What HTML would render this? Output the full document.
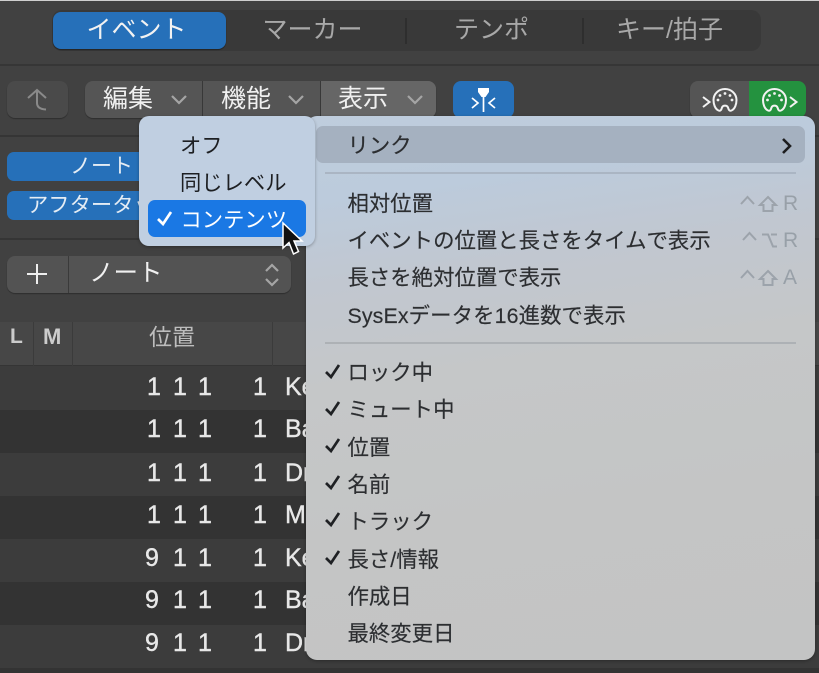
<!DOCTYPE html>
<html lang="ja"><head><meta charset="utf-8">
<style>
html,body{margin:0;padding:0;background:#3f3f3f}
#p{position:relative;width:819px;height:673px;overflow:hidden;background:#414141;font-family:"Liberation Sans","Noto Sans CJK JP",sans-serif;}
#p div,#p span.t,#p svg{position:absolute}
.t{position:absolute;white-space:nowrap;line-height:28px;height:28px}
.btn{background:#555;border-radius:8px;box-shadow:0 1px 1px rgba(0,0,0,.3)}
.m{font-size:21.400px;color:#2c2e31;left:347.500px;-webkit-text-stroke:.15px #2c2e31}
.n{font-size:25px;color:#e8e8e8;-webkit-text-stroke:.4px #e8e8e8}
.tab{font-size:25px;color:#a8a8a8;top:16px;text-align:center}
.tb{font-size:25px;color:#f0f0f0;top:85px}
.s{font-size:21px;color:#98a0a8;left:783px}
.a{left:147px}.b{left:173px}.c{left:198px}.d{left:253px}.e{left:285px}.f{left:145px}
</style></head><body>
<div id="p">
<div style="left:0;top:0;width:819px;height:1px;background:#cfcfcf"></div>
<!-- tabs -->
<div style="left:52px;top:10px;width:709px;height:41px;background:#393939;border-radius:10px"></div>
<div style="left:53px;top:12px;width:173px;height:37px;background:#2670b9;border-radius:8px;box-shadow:0 1px 1px rgba(0,0,0,.4)"></div>
<div style="left:405px;top:18px;width:2px;height:26px;background:#2e2e2e"></div>
<div style="left:582px;top:18px;width:2px;height:26px;background:#2e2e2e"></div>
<span class="t tab" style="left:50px;width:173px;color:#f2f2f2">イベント</span>
<span class="t tab" style="left:223px;width:179px">マーカー</span>
<span class="t tab" style="left:404px;width:175px">テンポ</span>
<span class="t tab" style="left:581px;width:177px">キー/拍子</span>
<div style="left:0;top:64px;width:819px;height:2px;background:#363636"></div>
<!-- toolbar -->
<div class="btn" style="left:7px;top:81px;width:61px;height:37px;background:#4a4a4a"></div>
<svg style="left:24px;top:86px" width="28" height="28" viewBox="0 0 28 28" fill="none" stroke="#8a8a8a" stroke-width="2"><path d="M4 12L13 4L22 12M13 4V17Q13 23 22 23.500"/></svg>
<div class="btn" style="left:85px;top:81px;width:351px;height:37px"></div>
<div style="left:320px;top:81px;width:116px;height:37px;background:#666;border-radius:0 8px 8px 0"></div>
<div style="left:202px;top:81px;width:1px;height:37px;background:#383838"></div>
<div style="left:320px;top:81px;width:1px;height:37px;background:#383838"></div>
<span class="t tb" style="left:103px">編集</span>
<span class="t tb" style="left:221px">機能</span>
<span class="t tb" style="left:338px">表示</span>
<svg style="left:170px;top:93px" width="18" height="14" fill="none" stroke="#a5a5a5" stroke-width="2.200"><path d="M2 3L9 10L16 3"/></svg>
<svg style="left:287px;top:93px" width="18" height="14" fill="none" stroke="#a5a5a5" stroke-width="2.200"><path d="M2 3L9 10L16 3"/></svg>
<svg style="left:406px;top:93px" width="18" height="14" fill="none" stroke="#a5a5a5" stroke-width="2.200"><path d="M2 3L9 10L16 3"/></svg>
<div style="left:453px;top:81px;width:61px;height:37px;background:#2670b9;border-radius:8px"></div>
<svg style="left:470px;top:86px" width="28" height="30" fill="none" stroke="#fff"><path d="M13.500 8V26M2 12L8 17L2 22M25 12L19 17L25 22" stroke-width="1.700"/><path d="M8 2H19V6L15.500 11H11.500L8 6Z" fill="#fff" stroke="none"/></svg>
<div class="btn" style="left:690px;top:81px;width:70px;height:37px"></div>
<div style="left:749px;top:81px;width:57px;height:37px;background:#24923f;border-radius:0 8px 8px 0"></div>
<svg style="left:700px;top:86px" width="44" height="28" fill="none" stroke="#f2f2f2" stroke-width="2"><path d="M3 11L9.500 16L3 21"/><path d="M18.500 24.500C15 23 13.500 18 13.500 14A11.500 11 0 0 1 36.500 14C36.500 18 35 23 31.500 24.500C29 25.500 28.500 23 28 21.500C27 19 23 19 22 21.500C21.500 23 21 25.500 18.500 24.500Z"/><g fill="#f2f2f2" stroke="none"><circle cx="25" cy="7.500" r="1.400"/><circle cx="20" cy="9.500" r="1.400"/><circle cx="30" cy="9.500" r="1.400"/><circle cx="18" cy="14" r="1.400"/><circle cx="32" cy="14" r="1.400"/></g></svg>
<svg style="left:760px;top:86px" width="44" height="28" fill="none" stroke="#f2f2f2" stroke-width="2"><path d="M30 11L36.500 16L30 21"/><g transform="translate(-10.500 0)"><path d="M18.500 24.500C15 23 13.500 18 13.500 14A11.500 11 0 0 1 36.500 14C36.500 18 35 23 31.500 24.500C29 25.500 28.500 23 28 21.500C27 19 23 19 22 21.500C21.500 23 21 25.500 18.500 24.500Z"/><g fill="#f2f2f2" stroke="none"><circle cx="25" cy="7.500" r="1.400"/><circle cx="20" cy="9.500" r="1.400"/><circle cx="30" cy="9.500" r="1.400"/><circle cx="18" cy="14" r="1.400"/><circle cx="32" cy="14" r="1.400"/></g></g></svg>
<div style="left:0;top:135px;width:819px;height:2px;background:#353535"></div>
<!-- pills -->
<div style="left:7px;top:152px;width:150px;height:29px;background:#2670b9;border-radius:7px"></div>
<div style="left:7px;top:191px;width:150px;height:29px;background:#2670b9;border-radius:7px"></div>
<span class="t" style="left:70px;top:153px;font-size:21px;color:#e4ecf4">ノート</span>
<span class="t" style="left:27px;top:191px;font-size:21.300px;color:#e4ecf4">アフタータッチ</span>
<div style="left:0;top:238px;width:819px;height:2px;background:#353535"></div>
<!-- add bar -->
<div class="btn" style="left:7px;top:256px;width:284px;height:37px;background:#535353"></div>
<div style="left:68px;top:256px;width:1px;height:37px;background:#3a3a3a"></div>
<svg style="left:27px;top:264px" width="20" height="20" stroke="#eee" stroke-width="2"><path d="M10 0V20M0 10H20"/></svg>
<span class="t" style="left:89px;top:260px;font-size:24.500px;color:#f0f0f0">ノート</span>
<svg style="left:263px;top:262px" width="18" height="26" fill="none" stroke="#a5a5a5" stroke-width="2.200"><path d="M3 9L9 3L15 9M3 17L9 23L15 17"/></svg>
<!-- table -->
<div style="left:0;top:310px;width:819px;height:12px;background:#414141"></div>
<div style="left:0;top:322px;width:819px;height:44px;background:#474747;border-bottom:1px solid #353535;box-sizing:border-box"></div>
<div style="left:33px;top:322px;width:1px;height:44px;background:#3b3b3b"></div>
<div style="left:72px;top:322px;width:1px;height:44px;background:#3b3b3b"></div>
<div style="left:272px;top:322px;width:1px;height:44px;background:#3b3b3b"></div>
<span class="t" style="left:10px;top:323px;font-size:21px;color:#ccc;font-weight:700">L</span>
<span class="t" style="left:43px;top:323px;font-size:22px;color:#ccc;font-weight:700">M</span>
<span class="t" style="left:149px;top:323px;font-size:23px;color:#bdbdbd">位置</span>
<div style="left:0;top:366px;width:819px;height:44px;background:#3c3c3c"></div>
<div style="left:0;top:410px;width:819px;height:43px;background:#333"></div>
<div style="left:0;top:453px;width:819px;height:43px;background:#3c3c3c"></div>
<div style="left:0;top:496px;width:819px;height:43px;background:#333"></div>
<div style="left:0;top:539px;width:819px;height:43px;background:#3c3c3c"></div>
<div style="left:0;top:582px;width:819px;height:43px;background:#333"></div>
<div style="left:0;top:625px;width:819px;height:43px;background:#3c3c3c"></div>
<div style="left:0;top:668px;width:819px;height:5px;background:#333"></div>
<span class="t n a" style="top:373px">1</span><span class="t n b" style="top:373px">1</span><span class="t n c" style="top:373px">1</span><span class="t n d" style="top:373px">1</span><span class="t n e" style="top:373px">Ke</span>
<span class="t n a" style="top:415px">1</span><span class="t n b" style="top:415px">1</span><span class="t n c" style="top:415px">1</span><span class="t n d" style="top:415px">1</span><span class="t n e" style="top:415px">Ba</span>
<span class="t n a" style="top:459px">1</span><span class="t n b" style="top:459px">1</span><span class="t n c" style="top:459px">1</span><span class="t n d" style="top:459px">1</span><span class="t n e" style="top:459px">Dr</span>
<span class="t n a" style="top:501px">1</span><span class="t n b" style="top:501px">1</span><span class="t n c" style="top:501px">1</span><span class="t n d" style="top:501px">1</span><span class="t n e" style="top:501px">M</span>
<span class="t n f" style="top:544px">9</span><span class="t n b" style="top:544px">1</span><span class="t n c" style="top:544px">1</span><span class="t n d" style="top:544px">1</span><span class="t n e" style="top:544px">Ke</span>
<span class="t n f" style="top:586px">9</span><span class="t n b" style="top:586px">1</span><span class="t n c" style="top:586px">1</span><span class="t n d" style="top:586px">1</span><span class="t n e" style="top:586px">Ba</span>
<span class="t n f" style="top:629px">9</span><span class="t n b" style="top:629px">1</span><span class="t n c" style="top:629px">1</span><span class="t n d" style="top:629px">1</span><span class="t n e" style="top:629px">Dr</span>
<!-- main menu -->
<div style="left:306px;top:116px;width:509px;height:544px;border-radius:11px;background:linear-gradient(172deg,#bfcddd 0%,#bccbdc 14%,#c1c7d0 28%,#c5c7c8 45%,#c4c5c5 70%,#c3c4c4 100%);box-shadow:0 1px 3px rgba(0,0,0,.3)"></div>
<div style="left:316px;top:126px;width:489px;height:37px;border-radius:7px;background:#a5b1c0"></div>
<svg style="left:778px;top:136px" width="18" height="20" fill="none" stroke="#1d1d1f" stroke-width="2.600"><path d="M5 3L12 10L5 17"/></svg>
<div style="left:325px;top:172px;width:471px;height:2px;background:#aab5c3"></div>
<div style="left:325px;top:342px;width:471px;height:2px;background:#adb1b5"></div>
<span class="t m" style="top:132px">リンク</span>
<span class="t m" style="top:190px">相対位置</span>
<span class="t m" style="top:227px">イベントの位置と長さをタイムで表示</span>
<span class="t m" style="top:264px">長さを絶対位置で表示</span>
<span class="t m" style="top:302px;letter-spacing:.1px">SysExデータを16進数で表示</span>
<span class="t m" style="top:359px">ロック中</span>
<span class="t m" style="top:396px">ミュート中</span>
<span class="t m" style="top:434px">位置</span>
<span class="t m" style="top:471px">名前</span>
<span class="t m" style="top:508px">トラック</span>
<span class="t m" style="top:546px">長さ/情報</span>
<span class="t m" style="top:583px">作成日</span>
<span class="t m" style="top:620px">最終変更日</span>
<svg style="left:325px;top:364px" width="16" height="16" fill="none" stroke="#1f2124" stroke-width="2.700"><path d="M1 8L6 13L14 1"/></svg>
<svg style="left:325px;top:401px" width="16" height="16" fill="none" stroke="#1f2124" stroke-width="2.700"><path d="M1 8L6 13L14 1"/></svg>
<svg style="left:325px;top:438px" width="16" height="16" fill="none" stroke="#1f2124" stroke-width="2.700"><path d="M1 8L6 13L14 1"/></svg>
<svg style="left:325px;top:475px" width="16" height="16" fill="none" stroke="#1f2124" stroke-width="2.700"><path d="M1 8L6 13L14 1"/></svg>
<svg style="left:325px;top:512px" width="16" height="16" fill="none" stroke="#1f2124" stroke-width="2.700"><path d="M1 8L6 13L14 1"/></svg>
<svg style="left:325px;top:550px" width="16" height="16" fill="none" stroke="#1f2124" stroke-width="2.700"><path d="M1 8L6 13L14 1"/></svg>
<!-- shortcuts -->
<svg style="left:738px;top:193px" width="44" height="24" fill="none" stroke="#9ca3ab" stroke-width="2"><path d="M3 11L9.500 4L16 11"/><path d="M30 4L38 12H34.500V18H25.500V12H22Z"/></svg>
<span class="t s" style="top:190px">R</span>
<svg style="left:740px;top:230px" width="44" height="24" fill="none" stroke="#9ca3ab" stroke-width="2"><path d="M3 10L9.500 3L16 10"/><path d="M22 4.500H28L33 16.500H37M31 4.500H37"/></svg>
<span class="t s" style="top:227px">R</span>
<svg style="left:738px;top:267px" width="44" height="24" fill="none" stroke="#9ca3ab" stroke-width="2"><path d="M3 11L9.500 4L16 11"/><path d="M30 4L38 12H34.500V18H25.500V12H22Z"/></svg>
<span class="t s" style="top:264px">A</span>
<!-- submenu -->
<div style="left:139px;top:116px;width:176px;height:130px;border-radius:10px;background:#c0cfe1;box-shadow:0 1px 3px rgba(0,0,0,.3)"></div>
<div style="left:148px;top:200px;width:158px;height:37px;border-radius:7px;background:#1a78e4"></div>
<span class="t" style="left:180px;top:132px;font-size:21.300px;color:#1d1f22">オフ</span>
<span class="t" style="left:180px;top:169px;font-size:21.300px;color:#1d1f22">同じレベル</span>
<span class="t" style="left:180.500px;top:206px;font-size:21.300px;color:#fff">コンテンツ</span>
<svg style="left:157px;top:211px" width="16" height="16" fill="none" stroke="#fff" stroke-width="2.700"><path d="M1 8L6 13L14 1"/></svg>
<!-- cursor -->
<svg style="left:280px;top:221px" width="26" height="36" viewBox="0 0 26 36"><path d="M3 2V27L9 21.500L13.500 33L18.500 30.500L14 20H22Z" fill="#111" stroke="#fff" stroke-width="1.500"/></svg>
</div>
</body></html>
